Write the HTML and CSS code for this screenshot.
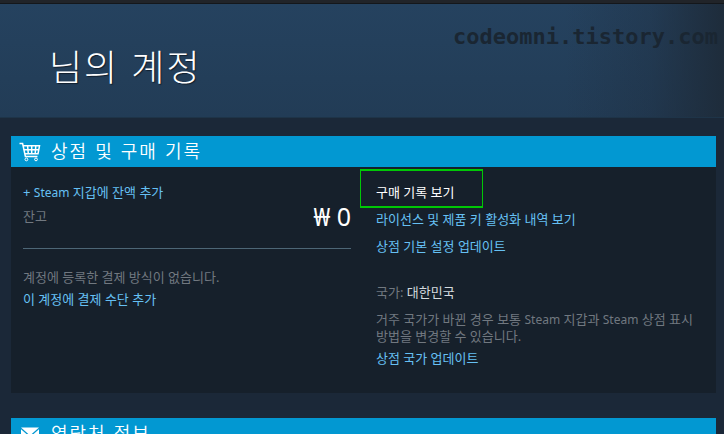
FILE: index.html
```html
<!DOCTYPE html>
<html lang="ko">
<head>
<meta charset="utf-8">
<meta name="viewport" content="width=device-width, initial-scale=1">
<title>님의 계정</title>
<link rel="stylesheet" href="styles.css">
</head>
<body>
<div class="topbar"></div>
<header class="page-header">
  <h1>님의 계정</h1>
  <span class="watermark">codeomni.tistory.com</span>
</header>
<main class="content">
  <section class="block">
    <h2 class="block-title">
      <svg class="icon" viewBox="0 0 22 20" aria-hidden="true">
        <path d="M0.5 1.5H3.6L6.4 14.5H18.5M4.2 3.8H20.5L19 11.8H6M5 7.8H19.7M8.6 3.8L9.3 11.8M12.7 3.8V11.8M16.8 3.8L16.2 11.8" fill="none" stroke="currentColor" stroke-width="1.5"/>
        <circle cx="7.4" cy="17.4" r="1.4" fill="none" stroke="currentColor"/>
        <circle cx="17" cy="17.4" r="1.4" fill="none" stroke="currentColor"/>
      </svg>
      <span>상점 및 구매 기록</span>
    </h2>
    <div class="panel">
      <div class="wallet">
        <a href="#" class="row">+ <span class="brand">Steam</span> 지갑에 잔액 추가</a>
        <div class="balance">
          <span class="muted">잔고</span>
          <span class="amount">₩ 0</span>
        </div>
        <hr>
        <p class="muted">계정에 등록한 결제 방식이 없습니다.</p>
        <a href="#" class="row">이 계정에 결제 수단 추가</a>
      </div>
      <div class="store">
        <ul class="links">
          <li class="marked"><a href="#" class="active">구매 기록 보기</a></li>
          <li><a href="#">라이선스 및 제품 키 활성화 내역 보기</a></li>
          <li><a href="#">상점 기본 설정 업데이트</a></li>
        </ul>
        <p class="country muted">국가: <span class="value">대한민국</span></p>
        <p class="note muted">거주 국가가 바뀐 경우 보통 <span class="brand">Steam</span> 지갑과 <span class="brand">Steam</span> 상점 표시 방법을 변경할 수 있습니다.</p>
        <a href="#" class="row">상점 국가 업데이트</a>
      </div>
    </div>
  </section>
  <section class="block">
    <h2 class="block-title">
      <svg class="icon" viewBox="0 0 22 20" aria-hidden="true">
        <path d="M2 3.5H20L11 11.5Z M2 5.2V17H20V5.2L11 13.2Z" fill="currentColor"/>
      </svg>
      <span>연락처 정보</span>
    </h2>
  </section>
</main>
</body>
</html>
```

FILE: styles.css
```css
*,
*::before {
  box-sizing: border-box;
}

html,
body {
  height: 100%;
}

body {
  margin: 0;
  overflow: hidden;
  background: #1b2838;
  color: #fff;
  font: 13px/18px "Noto Sans", "Noto Sans CJK KR", sans-serif;
}

h1,
h2,
p,
ul {
  margin: 0;
  padding: 0;
}

ul {
  list-style: none;
}

a {
  color: #66c0f4;
  text-decoration: none;
}

.topbar {
  height: 4px;
  background: #212429;
  border-bottom: 1px solid #14171b;
}

.page-header {
  position: relative;
  padding: 35px 48px 26px 49px;
  background:
    linear-gradient(to right, transparent 78%, rgba(29, 41, 56, 0.3) 90%, #1e2c3b 100%),
    linear-gradient(#25425f, #223c56);
  border-bottom: 1px solid #1e3448;
}

h1 {
  font-family: "Noto Sans CJK KR", sans-serif;
  font-size: 36px;
  line-height: 52px;
  font-weight: 300;
  letter-spacing: 2px;
  text-shadow: 1px 1px 1px rgba(0, 0, 0, 0.5);
}

.watermark {
  position: absolute;
  top: 20px;
  right: 6px;
  color: #1a2632;
  font: bold 22px/26px "DejaVu Sans Mono", monospace;
}

.content {
  padding: 18px 8px 0 11px;
}

.block {
  margin-bottom: 25px;
}

.block-title {
  display: flex;
  align-items: center;
  gap: 10px;
  height: 31px;
  padding-left: 8px;
  background: #0298d2;
  font-family: "Noto Sans CJK KR", sans-serif;
  font-size: 18px;
  line-height: 28px;
  font-weight: 350;
  letter-spacing: 2px;
}

.block-title span {
  padding-bottom: 4px;
}

.icon {
  width: 22px;
  height: 20px;
  flex: none;
}

.panel {
  display: grid;
  grid-template-columns: 1fr 1fr;
  gap: 25px;
  padding: 16px 12px 26px;
  background: #16202b;
}

.muted {
  color: #717880;
}

.brand {
  font-size: 12px;
  line-height: 12px;
}

.row {
  display: block;
}

.balance {
  display: flex;
  justify-content: space-between;
  margin-top: 6px;
}

.amount {
  font-size: 25px;
}

hr {
  height: 1px;
  margin: 23px 0 19px;
  border: 0;
  background: #4d6676;
}

.wallet p {
  margin-bottom: 4px;
}

.links {
  display: grid;
  gap: 9px;
}

.marked {
  position: relative;
}

.marked::before {
  content: "";
  position: absolute;
  top: -14px;
  left: -16px;
  width: 123px;
  height: 39px;
  border: 2px solid #00c806;
  border-width: 2px 1px;
  pointer-events: none;
}

.active {
  color: #fff;
}

.country {
  margin-top: 28px;
}

.value {
  color: #d5dade;
}

.note {
  margin: 10px 0 4px;
  line-height: 17px;
}
```
